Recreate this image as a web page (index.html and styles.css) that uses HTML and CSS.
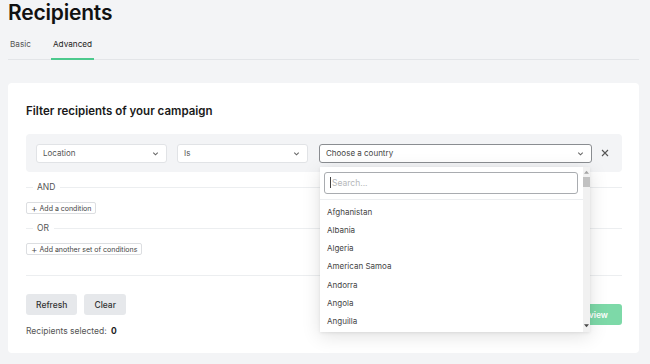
FILE: index.html
```html
<!DOCTYPE html>
<html lang="en">
<head>
    <meta charset="UTF-8">
    <title>Recipients</title>
    <link rel="stylesheet" href="styles.css">
</head>
<body>
<div class="page">
    <h1 class="title">Recipients</h1>
    <div class="tabs">
        <a class="tab">Basic</a>
        <a class="tab on">Advanced</a>
    </div>

    <div class="card">
        <h2 class="card-title">Filter recipients of your campaign</h2>

        <div class="rule-box">
            <div class="select sel-field">
                <span>Location</span>
                <svg class="chev" viewBox="0 0 10 10"><path d="M2.5 4l2.5 2.5L7.5 4" fill="none" stroke="#666" stroke-width="1.2"/></svg>
            </div>
            <div class="select sel-op">
                <span>Is</span>
                <svg class="chev" viewBox="0 0 10 10"><path d="M2.5 4l2.5 2.5L7.5 4" fill="none" stroke="#666" stroke-width="1.2"/></svg>
            </div>
            <div class="country-wrap">
                <div class="select sel-country focus">
                    <span>Choose a country</span>
                    <svg class="chev" viewBox="0 0 10 10"><path d="M2.5 4l2.5 2.5L7.5 4" fill="none" stroke="#666" stroke-width="1.2"/></svg>
                </div>
                <!-- opened dropdown -->
                <div class="dropdown">
                    <div class="search-row">
                        <div class="search"><span class="caret"></span>Search...</div>
                    </div>
                    <ul class="options">
                        <li>Afghanistan</li>
                        <li>Albania</li>
                        <li>Algeria</li>
                        <li>American Samoa</li>
                        <li>Andorra</li>
                        <li>Angola</li>
                        <li>Anguilla</li>
                    </ul>
                    <div class="scrollbar">
                        <svg class="arr up" viewBox="0 0 6 4"><path d="M0 4L3 0.5L6 4z" fill="#a3a3a3"/></svg>
                        <span class="thumb"></span>
                        <svg class="arr down" viewBox="0 0 6 4"><path d="M0 0L3 3.5L6 0z" fill="#4a4a4a"/></svg>
                    </div>
                </div>
            </div>
            <svg class="remove" viewBox="0 0 10 10"><path d="M2 2l6 6M8 2l-6 6" stroke="#555" stroke-width="1.1"/></svg>
        </div>

        <div class="sep"><span>AND</span></div>
        <button class="add-btn"><b>+</b> Add a condition</button>
        <div class="sep"><span>OR</span></div>
        <button class="add-btn"><b>+</b> Add another set of conditions</button>

        <div class="divider"></div>

        <div class="footer">
            <div class="left">
                <div class="btns">
                    <button class="btn">Refresh</button>
                    <button class="btn">Clear</button>
                </div>
                <p class="count">Recipients selected: <b>0</b></p>
            </div>
            <button class="btn green">Preview</button>
        </div>
    </div>
</div>
</body>
</html>
```

FILE: styles.css
```css
*{
    margin: 0;
    padding: 0;
    list-style: none;
    box-sizing: border-box;
}
html,body{
    width: 100%;
    height: 100%;
}
body{
    background: #f3f4f6;
    font-family: Inter, "Liberation Sans", sans-serif;
    color: #222;
    overflow: hidden;
}
.page{
    padding: 0 11px 0 8px;
}
.title{
    font-size: 21px;
    font-weight: 600;
    line-height: 26px;
    color: #111;
    letter-spacing: -0.2px;
}
.tabs{
    display: flex;
    margin-top: 10px;
    border-bottom: 1px solid #e3e5e8;
}
.tab{
    font-size: 8.2px;
    color: #555;
    padding: 3px 2px 9px;
    margin-right: 18px;
    border-bottom: 2px solid transparent;
    margin-bottom: -1px;
}
.tab.on{
    color: #222;
    border-bottom-color: #4cc98d;
}
.card{
    margin-top: 23px;
    background: #fff;
    border-radius: 4px;
    padding: 20px 17px 0 18px;
    height: 270px;
}
.card-title{
    font-size: 11.5px;
    font-weight: 600;
    color: #1a1a1a;
    line-height: 16px;
}
.rule-box{
    margin-top: 15px;
    background: #f3f4f6;
    border-radius: 4px;
    height: 38px;
    display: flex;
    align-items: center;
    padding: 0 10px;
}
.select{
    height: 19px;
    background: #fff;
    border: 1px solid #e1e3e6;
    border-radius: 3px;
    display: flex;
    align-items: center;
    justify-content: space-between;
    padding: 0 6px;
    font-size: 8px;
    color: #555;
}
.sel-field{ width: 131px; }
.sel-op{ width: 131px; margin-left: 10px; }
.country-wrap{
    position: relative;
    margin-left: 11px;
}
.sel-country{ width: 273px; }
.select.focus{
    border-color: #8a8d91;
    color: #444;
}
.chev{
    width: 9px;
    height: 9px;
}
.remove{
    width: 10px;
    height: 10px;
    margin-left: 8px;
}
.dropdown{
    position: absolute;
    left: 1px;
    top: 23px;
    width: 270px;
    height: 165px;
    background: #fff;
    box-shadow: 0 4px 18px rgba(0,0,0,0.12), 0 1px 3px rgba(0,0,0,0.08);
    z-index: 5;
}
.search-row{
    padding: 5px 12px 0 4px;
    height: 33px;
    border-bottom: 1px solid #eceef0;
}
.search{
    height: 22px;
    border: 1px solid #a9acb0;
    border-radius: 3px;
    font-size: 8.5px;
    color: #b5b7ba;
    display: flex;
    align-items: center;
    padding-left: 5px;
}
.caret{
    width: 1px;
    height: 11px;
    background: #444;
    margin-right: 1px;
}
.options{
    padding-top: 3px;
}
.options li{
    font-size: 8px;
    color: #444;
    height: 18.3px;
    line-height: 18.3px;
    padding-left: 7px;
}
.scrollbar{
    position: absolute;
    right: 0;
    top: 0;
    bottom: 0;
    width: 7px;
    background: #f1f1f1;
}
.arr{
    position: absolute;
    left: 1px;
    width: 5px;
    height: 4px;
}
.arr.up{
    top: 3px;
}
.arr.down{
    bottom: 4px;
}
.thumb{
    position: absolute;
    left: 0;
    top: 10px;
    width: 7px;
    height: 10px;
    background: #c1c1c1;
}
.sep{
    display: flex;
    align-items: center;
    margin-top: 10px;
    height: 10px;
    font-size: 8.5px;
    color: #555;
}
.sep::before{
    content: "";
    width: 7px;
    height: 1px;
    background: #eceef0;
    margin-right: 4px;
}
.sep::after{
    content: "";
    flex: 1;
    height: 1px;
    background: #eceef0;
    margin-left: 5px;
}
.add-btn{
    display: block;
    margin-top: 11px;
    height: 12px;
    padding: 0 4px;
    border: 1px solid #dcdee1;
    border-radius: 2px;
    background: #fff;
    font-family: Inter, "Liberation Sans", sans-serif;
    font-size: 7px;
    color: #444;
    line-height: 10px;
}
.add-btn + .sep{
    margin-top: 9px;
}
.sep + .add-btn{
    margin-top: 10px;
}
.add-btn b{
    font-weight: 300;
    font-size: 10px;
    vertical-align: -1px;
}
.divider{
    margin-top: 20px;
    height: 1px;
    background: #eceef0;
}
.footer{
    display: flex;
    justify-content: space-between;
    align-items: flex-start;
    margin-top: 18px;
}
.btns{
    display: flex;
    gap: 7px;
}
.btn{
    height: 21px;
    padding: 0 10px;
    border: none;
    border-radius: 3px;
    background: #e6e8eb;
    font-family: Inter, "Liberation Sans", sans-serif;
    font-size: 8.5px;
    font-weight: 500;
    color: #333;
}
.btn.green{
    margin-top: 10px;
    background: #7dd9a8;
    color: #fff;
    font-weight: 600;
    padding: 0 14px;
}
.count{
    margin-top: 10px;
    font-size: 8.5px;
    line-height: 12px;
    color: #555;
}
.count b{
    color: #222;
    margin-left: 2px;
}
```
